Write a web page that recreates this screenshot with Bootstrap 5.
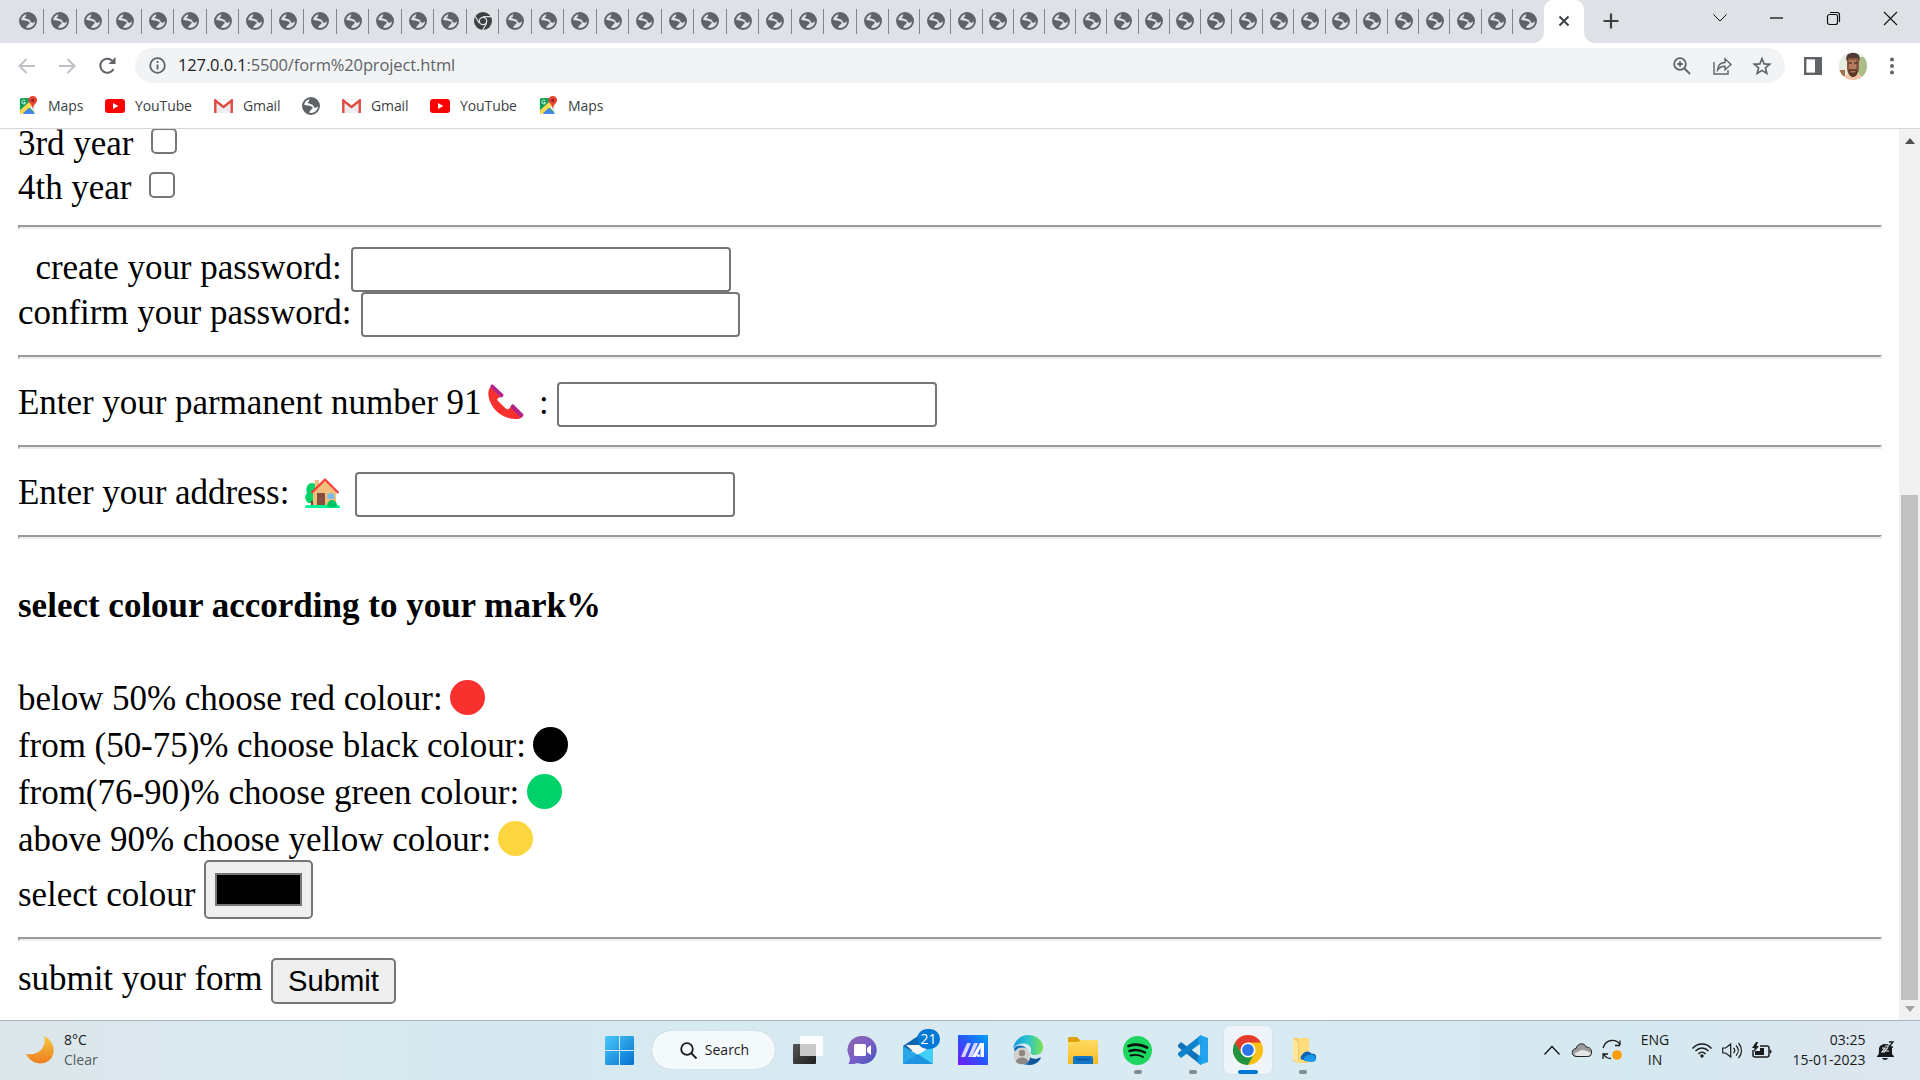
<!DOCTYPE html>
<html lang="en">
<head>
<meta charset="utf-8">
<title>form project</title>
<link href="https://cdn.jsdelivr.net/npm/bootstrap@5.3.0/dist/css/bootstrap.min.css" rel="stylesheet">
<style>
  body { width: 1920px; height: 1080px; font-family: "Open Sans", "Noto Sans", sans-serif; color: #000; background: #fff; }
  svg { display: block; flex: none; overflow: visible; }
  /* tab strip */
  .tabstrip { height: 43px; background: #dee1e6; padding-left: 11.5px; color: #5f6368; }
  .tab-mini { width: 32.5px; height: 42px; flex: none; }
  .tab-mini.narrow { width: 31.2px; }
  .tab-mini::after { content: ""; width: 1px; height: 25px; background: #80868b; margin-left: -1px; }
  .tab-mini:last-of-type::after { visibility: hidden; }
  .tab-mini svg { margin: 0 auto; }
  .tab-open { width: 40px; height: 43px; margin-right: -1px; padding-bottom: 1px; background: #fff; border-radius: 9px 9px 0 0; color: #3c4043; position: relative; }
  .tab-open::before, .tab-open::after { content: ""; position: absolute; bottom: 0; width: 10px; height: 10px; }
  .tab-open::before { left: -10px; background: radial-gradient(circle at 0 0, transparent 9.5px, #fff 10px); }
  .tab-open::after { right: -10px; background: radial-gradient(circle at 100% 0, transparent 9.5px, #fff 10px); }
  .win-btn { width: 57px; height: 36px; color: #111; }
  .win-set { margin-right: 1px; }
  /* toolbar */
  .toolbar-row { height: 45px; padding: 5px 0 5px 18px; color: #5f6368; }
  .omnibox { width: 1650px; height: 35px; border-radius: 18px; background: #f1f3f4; margin-left: 19px; padding: 0 14px; }
  .url-text { font-size: 16.500px; line-height: 22px; letter-spacing: -.13px; margin: 0 0 1px 12px; color: #5f6368; white-space: nowrap; }
  .url-text b { font-weight: 400; color: #202124; }
  .avatar { width: 28px; height: 28px; border-radius: 50%; overflow: hidden; }
  .bookmarks { height: 41px; border-bottom: 1px solid #d5d7da; padding: 0 0 5px 19px; font-size: 14px; color: #3c4043; }
  .bm { height: 24px; white-space: nowrap; flex: none; }
  .bm span { margin: 0 0 1px 10px; letter-spacing: -.1px; }
  /* page */
  .page-view { height: 891px; overflow: hidden; }
  .doc { width: 1899px; padding: 0 17.5px 0 18px; font-family: "Liberation Serif", serif; font-size: 35px; letter-spacing: -.04px; margin-top: -8px; height: 899px; }
  .line { display: flex; align-items: flex-start; height: 44px; line-height: 46px; white-space: pre; }
  .line > label, .line > span { flex: none; }
  .rule { height: 4px; border-style: solid; border-width: 2px; border-color: #9a9a9a #eee #eee #9a9a9a; }
  .text-in { width: 380px; height: 45px; border: 2px solid #767676; border-radius: 4px; margin-top: 2px; padding: 2px 4px; background: #fff; }
  .tick { appearance: none; width: 26px; height: 26px; border: 2px solid #767676; border-radius: 5px; background: #fff; margin: 6.500px 0 0; }
  .swatch { width: 109px; height: 59px; padding: 11px 9px; border: 2px solid #767676; border-radius: 5px; background: #efefef; margin-top: -12px; }
  .swatch::-webkit-color-swatch-wrapper { padding: 0; }
  .swatch::-webkit-color-swatch { border: 2px solid #767676; border-radius: 0; }
  .send { width: 125px; height: 46px; padding: 0; border: 2px solid #767676; border-radius: 5px; background: #efefef; color: #000; font: 29.2px/42px "Liberation Sans", sans-serif; margin-top: 2px; }
  .dot { width: 35px; height: 35px; border-radius: 50%; margin-top: 4px; }
  .doc h4 { font-size: 35px; font-weight: 700; letter-spacing: 0; margin: 0; }
  .scroller { width: 21px; background: #f1f1f1; height: 891px; padding: 9px 0 8px; }
  .thumb { width: 17px; height: 505px; background: #c1c1c1; }
  /* taskbar */
  .taskbar { height: 60px; border-top: 1px solid #a9b4bc; padding-bottom: 1px; background: linear-gradient(90deg, #dce6ea 0, #dce8ef 8%, #d6e9f0 25%, #d9eaf2 60%, #d5e9f1 85%, #dbe6ef 96%, #dce8ef 100%); font-size: 14px; line-height: 20px; color: #191919; }
  .slot { width: 55px; height: 58px; position: relative; left: -.500px; flex: none; }
  .slot.running::after { content: ""; position: absolute; bottom: 5px; left: 24px; width: 8px; height: 4px; border-radius: 2px; background: #7f8b91; }
  .slot.current::before { content: ""; position: absolute; left: 4px; top: 5px; width: 48px; height: 48px; border-radius: 5px; background: #eef4fa; box-shadow: 0 0 1px #aebcc4; }
  .slot.current::after { left: 18px; width: 20px; background: #0078d4; }
  .slot svg { position: relative; }
  .searchbox { width: 123px; height: 38px; border-radius: 19px; background: #f4f9fc; margin: 0 5.5px 0 4.5px; padding-left: 2px; box-shadow: 0 0 1px #9db0ba; font-size: 14px; }
  .mail-count { position: absolute; left: 27px; top: 8px; width: 23px; height: 20px; border-radius: 10px; background: #0078d4; color: #fff; font-size: 14px; }
  .tray { width: 30px; flex: none; }
</style>
<script src="https://cdn.jsdelivr.net/npm/bootstrap@5.3.0/dist/js/bootstrap.bundle.min.js"></script>
</head>
<body class="overflow-hidden">
<svg width="0" height="0" class="position-absolute">
  <defs>
    <symbol id="globe" viewBox="0 0 18 18"><circle cx="9" cy="9" r="8" fill="none" stroke="#5f6368" stroke-width="1.9"/><path fill="#5f6368" d="M1 8.200C3 7.500 4 8.600 6 8.600c1.800 0 2.200 1 3.400 1 1.500.1 1.600 1.700.6 2.300-1.300.6-1.200 1.300-2 2.200-.9 1-1 2-.300 3C3 16.500 1 13 1 8.200z"/><path fill="#5f6368" d="M9 .8C7.500 2.200 6.600 2.800 7 4c.3 1.200-1.800 1-1.500 2.100.3.700 1.500.2 2.200.7.800.7 2 .4 2.900 1 1 .7.700 2.200 2 2.700 1.300.4 2 .2 2.600-.700.500-.6 1.200-.8 2-.5C17.800 5 14 .8 9 .8z"/></symbol>
    <symbol id="chrome-dark" viewBox="0 0 18 18"><circle cx="9" cy="9" r="9" fill="#3c4043"/><circle cx="9" cy="9" r="3.700" fill="#3c4043" stroke="#dee1e6" stroke-width="1.300"/><path d="M9 4.700h8M5.300 11.200 1.300 4.500M12.700 11.200 8.600 18" stroke="#dee1e6" stroke-width="1.200"/></symbol>
    <symbol id="maps" viewBox="0 0 18 20"><path fill="#34a853" d="M2 2h13v16H2a2 2 0 0 1-2-2V4a2 2 0 0 1 2-2z"/><path fill="#0f9d58" d="M0 3h9v7l-9 6z"/><path fill="#ffd84d" d="m0 15 10-9 3 4-11 9H0z"/><path fill="#4285f4" d="m3 19 6-6 7 6z"/><path fill="#e6e9ed" d="m10 12 5-4 1 10z"/><path d="M5.500 5a2 2 0 1 0 .5 2H4" fill="none" stroke="#fff" stroke-width=".9"/><path fill="#ea4335" d="M13.500 0A4.400 4.400 0 0 0 9 4.500C9 8 13 8 13.500 14c.5-6 4.500-6 4.500-9.500A4.400 4.400 0 0 0 13.500 0z"/><circle cx="13.500" cy="4.500" r="1.600" fill="#8b251e"/></symbol>
    <symbol id="yt" viewBox="0 0 20 14"><rect width="20" height="14" rx="3" fill="#f00"/><path d="m8 4 5.300 3L8 10z" fill="#fff"/></symbol>
    <symbol id="gmail" viewBox="0 0 19 14"><path fill="#eee" d="M2 0h15v14H2z"/><path fill="#fff" d="m2 1 7.500 6L17 1z"/><path d="M2 14 8 7M17 14l-6-7" stroke="#ddd"/><path fill="none" stroke="#e04a3f" stroke-width="2.400" d="M1.300 14V1.500l8.200 6.500 8.200-6.500V14"/></symbol>
    <linearGradient id="blue" x2="1" y2="1"><stop stop-color="#4cc9fb"/><stop offset="1" stop-color="#0270cf"/></linearGradient>
    <linearGradient id="moonfill" x2="0" y2="1"><stop stop-color="#f5c842"/><stop offset="1" stop-color="#ee7d1d"/></linearGradient>
    <linearGradient id="violet" x2="1" y2="1"><stop stop-color="#8c66aa"/><stop offset=".5" stop-color="#7b5fc7"/><stop offset="1" stop-color="#4355bf"/></linearGradient>
    <linearGradient id="mi" x1="0" y1="1" x2="1" y2="0"><stop stop-color="#7417fa"/><stop offset=".5" stop-color="#2855fc"/><stop offset="1" stop-color="#00a5fb"/></linearGradient>
    <linearGradient id="yellow" x2="0" y2="1"><stop stop-color="#ffdb65"/><stop offset="1" stop-color="#fbba20"/></linearGradient>
    <linearGradient id="edgefill"><stop stop-color="#159bdf"/><stop offset=".5" stop-color="#2dc4cb"/><stop offset="1" stop-color="#7be34b"/></linearGradient>
    <linearGradient id="dark" x2="1" y2="1"><stop stop-color="#555"/><stop offset="1" stop-color="#202020"/></linearGradient>
  </defs>
</svg>

<header>
  <div class="tabstrip d-flex" id="tabs">
    <div class="tab-open d-flex align-items-center justify-content-center"><svg width="10" height="10" stroke="currentColor" stroke-width="2"><path d="m.5.5 9 9m0-9-9 9"/></svg></div>
    <svg style="margin:13px 0 0 20px" width="16" height="16" stroke="#3c4043" stroke-width="2.200"><path d="M8 .5v15M.5 8h15"/></svg>
    <div class="win-set d-flex ms-auto">
      <div class="win-btn d-flex align-items-center justify-content-center"><svg width="14" height="8" fill="none" stroke="currentColor"><path d="m.5.5 6.500 6.500 6.500-6.500"/></svg></div>
      <div class="win-btn d-flex align-items-center justify-content-center"><svg width="13" height="2"><path d="M0 1h13" stroke="currentColor" stroke-width="1.300"/></svg></div>
      <div class="win-btn d-flex align-items-center justify-content-center"><svg width="13" height="13" fill="none" stroke="currentColor" stroke-width="1.200"><rect x=".5" y="2.500" width="10" height="10" rx="2"/><path d="M3 .5h7a2.500 2.500 0 0 1 2.500 2.500v7"/></svg></div>
      <div class="win-btn d-flex align-items-center justify-content-center"><svg width="13" height="13" stroke="currentColor" stroke-width="1.100"><path d="m0 0 13 13M13 0 0 13"/></svg></div>
    </div>
  </div>

  <div class="toolbar-row d-flex align-items-center">
    <svg width="17" height="16" fill="none" stroke="#bdc1c6" stroke-width="2"><path d="M17 8H2M8.500 1 1.500 8l7 7"/></svg>
    <svg style="margin-left:24px" width="17" height="16" fill="none" stroke="#bdc1c6" stroke-width="2"><path d="M0 8h15M8.500 1l7 7-7 7"/></svg>
    <svg style="margin-left:22px" width="18" height="17" fill="none" stroke="#5f6368" stroke-width="2"><path d="M15.500 12A7 7 0 1 1 14 3.500"/><path fill="#5f6368" stroke="none" d="M17.500 0v7H10.500z"/></svg>
    <div class="omnibox d-flex align-items-center">
      <svg width="17" height="17" fill="none" stroke="#5f6368" stroke-width="1.800"><circle cx="8.500" cy="8.500" r="7.300"/><path d="M8.500 7.500v5M8.500 4v2"/></svg>
      <div class="url-text"><b>127.0.0.1</b>:5500/form%20project.html</div>
      <svg class="ms-auto" width="18" height="18" fill="none" stroke="#5f6368" stroke-width="1.800"><circle cx="7" cy="7" r="5.800"/><path d="m11.500 11.500 5.500 5.500M4.300 7h5.400M7 4.300v5.400"/></svg>
      <svg style="margin-left:22px" width="19" height="18" fill="none" stroke="#5f6368" stroke-width="1.400"><path d="M1 5v12h14v-4"/><path d="M4.500 13C5 8 8 5.500 12 5.500V1.800L18 7.500l-6 5.200V9.200C8.500 9 6.500 10.200 4.500 13z"/></svg>
      <svg style="margin:0 0 0 21px" width="18" height="18" fill="none" stroke="#5f6368" stroke-width="1.700"><path d="m9 1.700 2.100 5.200 5.600.4-4.300 3.600 1.400 5.500L9 13.400l-4.800 3 1.400-5.500L1.300 7.300l5.600-.4z"/></svg>
    </div>
    <svg style="margin-left:19px" width="18" height="18"><rect x="1.200" y="1.200" width="15.600" height="15.600" fill="#fff" stroke="#5f6368" stroke-width="2.400"/><path fill="#5f6368" d="M11 1h6v16h-6z"/></svg>
    <div class="avatar" style="margin-left:17px">
      <svg width="28" height="28"><path fill="#e8ebe0" d="M0 0h28v28H0z"/><path fill="#a9be88" d="M19 5h9v20h-8z"/><path fill="#a26f49" d="M0 18h6v6H0z"/><path fill="#f3c3aa" d="M3 28c1-5 5-6 11-6s10 1 11 6z"/><path fill="#8d5740" d="M8 6h12v10c0 5-3 9-6 9s-6-4-6-9z"/><path fill="#b47a5b" d="M10 8h7v8l-3 3-4-3z"/><path fill="#4b3a35" d="M7.500 9C6.500 3 9 1 14 1s7.500 2 6.500 8l-2-3h-9z"/><path fill="#5a3626" d="M9 18c3-1 7-1 10 0-1 5-3 7-5 7s-4-2-5-7z"/><path fill="#b97762" d="M11.500 19h5v1.500h-5z"/><path stroke="#36221a" stroke-width="1.200" d="M9.500 11h3.500M15 11h3.500"/></svg>
    </div>
    <svg style="margin-left:22px" width="6" height="18" fill="#5f6368"><circle cx="3" cy="2.500" r="2"/><circle cx="3" cy="9" r="2"/><circle cx="3" cy="15.500" r="2"/></svg>
  </div>

  <nav class="bookmarks d-flex align-items-center">
    <div class="bm d-flex align-items-center" style="width:86px"><svg width="19" height="19"><use href="#maps"/></svg><span>Maps</span></div>
    <div class="bm d-flex align-items-center" style="width:109px"><svg width="20" height="14"><use href="#yt"/></svg><span>YouTube</span></div>
    <div class="bm d-flex align-items-center" style="width:88px"><svg width="19" height="14"><use href="#gmail"/></svg><span>Gmail</span></div>
    <div class="bm d-flex align-items-center" style="width:40px"><svg width="18" height="18"><use href="#globe"/></svg></div>
    <div class="bm d-flex align-items-center" style="width:88px"><svg width="19" height="14"><use href="#gmail"/></svg><span>Gmail</span></div>
    <div class="bm d-flex align-items-center" style="width:109px"><svg width="20" height="14"><use href="#yt"/></svg><span>YouTube</span></div>
    <div class="bm d-flex align-items-center"><svg width="19" height="19"><use href="#maps"/></svg><span>Maps</span></div>
  </nav>
</header>

<main class="page-view d-flex">
  <form class="doc">
    <div class="line"><label style="width:133px">3rd year</label><input class="tick" type="checkbox"></div>
    <div class="line"><label style="width:131px">4th year</label><input class="tick" type="checkbox"></div>
    <div class="rule" style="margin:16px 0"></div>
    <div class="line" style="height:45px"><label style="width:333px;padding-left:17.5px">create your password:</label><input class="text-in" type="password"></div>
    <div class="line"><label style="width:343px">confirm your password:</label><input class="text-in" style="width:379px" type="password"></div>
    <div class="rule" style="margin:21px 0"></div>
    <div class="line"><label style="width:470px">Enter your parmanent number 91</label><svg style="margin-top:4px" width="35" height="35"><path fill="#f8312f" d="M2.500 3C-2 8 1 18 6 24.500 12 31.500 19 35 28 35c2.500 0 4-.5 5.500-1.500L22.700 22.500c-1.200 2.500-3 3.500-5 2L10 17c-1.500-2-.3-3 2.700-4z"/><path fill="#b4238a" d="m4.700.4 10.600 9.900c1 1-1.600 3.900-2.600 2.900L2.500 3.500C1.800 2.500 3.700-.3 4.700.4zM25.300 20.300l10 9.900c1 1-1.600 4.200-2.700 3.400L22.600 23.500c-.8-1 1.600-4.100 2.700-3.200z"/></svg><span style="width:34px;padding-left:16px">:</span><input class="text-in" type="text"></div>
    <div class="rule" style="margin:21px 0"></div>
    <div class="line"><label style="width:287px">Enter your address:</label><svg style="margin:8px 15px 0 0" width="35" height="32"><path fill="#00d26a" d="M7 5c4 0 7 5 7 9v11H3c-4-4-3-8-1-10-2-5 1-10 5-10z"/><path fill="#6d4534" d="M6 23h2.500v6H6z"/><path fill="#f3bd7b" d="M10 2h4v10h-4zM8 14 20 3l11 11v14H8z"/><path fill="none" stroke="#f8403b" stroke-width="2.300" stroke-linejoin="round" d="M6.500 15 20 1.500 33.500 15"/><path fill="#85503f" d="M12 15h8v13h-8z"/><path fill="#76bdf2" d="M22.500 15.500H29V21h-6.500z"/><path fill="#00f397" d="M0 29.500C0 28 1 27 2 27h31c1 0 2 1 2 2.500V30H0z"/><path fill="#00c463" d="M22 28c0-3 2-6 5-6s5 3 5 5.500c0 2.500-10 2.500-10 .5z"/></svg><input class="text-in" type="text"></div>
    <div class="rule" style="margin:21px 0 44px"></div>
    <h4 class="line">select colour according to your mark%</h4>
    <div class="line" style="height:47px;margin-top:49px"><span style="width:432px">below 50% choose red colour:</span><i class="dot" style="background:#f8312f"></i></div>
    <div class="line" style="height:47px"><span style="width:515px">from (50-75)% choose black colour:</span><i class="dot" style="background:#000"></i></div>
    <div class="line" style="height:47px"><span style="width:508.5px">from(76-90)% choose green colour:</span><i class="dot" style="background:#00d26a"></i></div>
    <div class="line" style="height:55px"><span style="width:480px">above 90% choose yellow colour:</span><i class="dot" style="background:#fcd53f"></i></div>
    <div class="line"><label style="width:186px">select colour</label><input class="swatch" type="color" value="#000000"></div>
    <div class="rule" style="margin:21px 0 15px"></div>
    <div class="line"><label style="width:253px">submit your form</label><button class="send" type="button">Submit</button></div>
  </form>
  <div class="scroller d-flex flex-column align-items-center justify-content-between">
    <svg width="10" height="6" fill="#505050"><path d="m0 6 5-6 5 6z"/></svg>
    <div class="mt-auto thumb" style="margin-bottom:6px"></div>
    <svg width="10" height="6" fill="#a3a3a3"><path d="m0 0 5 6 5-6z"/></svg>
  </div>
</main>

<footer class="taskbar d-flex align-items-center">
  <div class="d-flex align-items-center" style="width:592.5px;padding-left:26px">
    <svg width="28" height="28"><path fill="url(#moonfill)" d="M18 0c9 4 12 14 8 21-5 9-20 9-26-3 12 2 21-6 18-18z"/></svg>
    <div style="margin-left:10px"><div>8°C</div><div style="color:#555b5e">Clear</div></div>
  </div>
  <div class="slot d-flex align-items-center justify-content-center"><svg width="29" height="29"><path fill="url(#blue)" d="M1 0h13v14H0V1zM15 0h13l1 1v13H15zM0 15h14v14H1l-1-1zM15 15h14v13l-1 1H15z"/></svg></div>
  <div class="searchbox d-flex align-items-center justify-content-center gap-2"><svg width="17" height="17" fill="none" stroke="#1a1a1a" stroke-width="1.800"><circle cx="7" cy="7" r="5.800"/><path d="m11 11 5.500 5.500"/></svg><span>Search</span></div>
  <div class="slot d-flex align-items-center justify-content-center"><svg width="30" height="28"><rect y="8" width="23" height="20" rx="1" fill="url(#dark)"/><rect x="7" width="23" height="20" rx="1" fill="#fff" fill-opacity=".88"/><path fill="#c9c9c9" d="M7 8h16v12H7z"/></svg></div>
  <div class="slot d-flex align-items-center justify-content-center"><svg width="29" height="28"><path fill="url(#violet)" d="M14.500 0a14 14 0 1 1-5 27c-2 1-5 1-9 1 1-3 2-4 1-7A14 14 0 0 1 14.500 0z"/><rect x="6" y="8" width="12" height="12" rx="1.500" fill="#fff"/><path fill="#fff" d="m19 12 4-3v10l-4-3z"/></svg></div>
  <div class="slot d-flex align-items-center justify-content-center"><svg width="30" height="28"><path fill="#1064ae" d="M0 10 15 0l15 10v5H0z"/><path fill="#f5f5f5" d="M3 9h25L16 21z"/><path fill="#29a7e8" d="M0 10v18h30z"/><path fill="#41d0fa" d="M30 10v18L15 18.500z"/><path fill="#1e93e0" d="M0 28h30L15 18z"/></svg><span class="mail-count d-flex align-items-center justify-content-center">21</span></div>
  <div class="slot d-flex align-items-center justify-content-center"><svg width="30" height="30"><path fill="url(#mi)" d="M0 0h30v30H0z"/><path fill="#d7d4ff" d="M9 8h4L7 22H3zM16 8h4l-6 14h-4z"/><path fill="#fff" d="m22 8 4 0v14h-3.500v-9L18 22h-4z"/><circle cx="20.500" cy="20.500" r="1.500" fill="#fff"/></svg></div>
  <div class="slot d-flex align-items-center justify-content-center"><svg width="30" height="30"><path fill="#1470bb" d="M1 13c2 11 6 17 15 17 6 0 10-3 12-7-6 2-12 1-13-5-1-7-8-10-14-5z"/><path fill="url(#edgefill)" d="M0 13C2 5 8 0 15 0c9 0 15 6 15 12 0 5-3 8-8 8-4 0-5-2-4-4 1-7-9-11-18-3z"/><path fill="#12569a" d="M15 20c2 5 8 5 13 2-3 6-8 8-13 8z"/><circle cx="9" cy="21" r="8.500" fill="#d1d0cf"/><circle cx="9" cy="18" r="3.200" fill="#8c8785"/><path fill="#8c8785" d="M3 27c0-6 12-6 12 0-3 3-9 3-12 0z"/></svg></div>
  <div class="slot d-flex align-items-center justify-content-center"><svg width="30" height="27"><path fill="#e0a10a" d="M0 1.500C0 .7.700 0 1.500 0H9l3 3h17c1 0 1 1 1 2H0z"/><path fill="url(#yellow)" d="M0 5h10l3-2h17v23c0 1 0 1-1 1H1c-1 0-1 0-1-1z"/><path fill="#1176c5" d="M5 27v-6a2 2 0 0 1 2-2h16a2 2 0 0 1 2 2v6z"/><path stroke="#0b4e91" stroke-width="1.300" d="M8.500 22.500h13"/></svg></div>
  <div class="slot running d-flex align-items-center justify-content-center"><svg width="29" height="29"><circle cx="14.500" cy="14.500" r="14.500" fill="#1ed760"/><path fill="none" stroke="#07120b" stroke-linecap="round" d="M5.500 10c6-2 13-1.500 18.500 1.500" stroke-width="2.800"/><path fill="none" stroke="#07120b" stroke-linecap="round" stroke-width="2.400" d="M6.500 15c5-1.500 11-1 15.500 1.500"/><path fill="none" stroke="#07120b" stroke-linecap="round" stroke-width="1.900" d="M7.500 19.500c4-1 9-.6 12.500 1.500"/></svg></div>
  <div class="slot running d-flex align-items-center justify-content-center"><svg width="30" height="30"><path fill="#1272b9" d="m0 10 3-3 20 15v8L0 12z"/><path fill="#0f82cc" d="m0 20 3 3L23 8V0L0 18z"/><path fill="#23a3ee" d="m22 0 8 3v24l-8 3z"/><path fill="#159ce3" d="m20 2 3-2v9l-3 1zM20 28l3 2v-9l-3-1z"/></svg></div>
  <div class="slot running current d-flex align-items-center justify-content-center"><svg width="30" height="30"><circle cx="15" cy="15" r="15" fill="#fbc116"/><path fill="#e33b2e" d="M2 7.500A15 15 0 0 1 28 7.500H15L8.500 19z"/><path fill="#229342" d="M2 7.500 8.500 18.700 15 22.500 21 19 15 30A15 15 0 0 1 2 7.500z"/><circle cx="15" cy="15" r="7.500" fill="#fff"/><circle cx="15" cy="15" r="5.900" fill="#2d76e8"/></svg></div>
  <div class="slot running d-flex align-items-center justify-content-center"><svg width="30" height="27"><path fill="#ffdc7b" d="M5 1h16v25H8z"/><path fill="#f2c75f" d="M5 1h4l2 4v19l-2 2-4-2z"/><path fill="#ffe69a" d="m5 1 5 4v21l-5-3z"/><path fill="#0d64b5" d="M14 18c2-4 7-5 10-1 3-1 5 2 4 5l-13 1c-3 0-3-4-1-5z"/><path fill="#1b98ea" d="M16 21c4-5 12-4 12 1s-10 2-12 2z"/></svg></div>
  <div class="d-flex align-items-center ms-auto" style="width:383px">
    <div class="tray d-flex justify-content-center"><svg width="16" height="9" fill="none" stroke="#111" stroke-width="1.300"><path d="m.5 8.500 7.500-8 7.500 8"/></svg></div>
    <div class="tray d-flex justify-content-center"><svg width="20" height="14"><path fill="#9b9b9b" stroke="#222" d="M4 13.500C-1 13-1 6 4 5.500 6-1 13 0 14 4c4 0 6 3 5.500 6-.5 3-2 3.500-4 3.500z"/><path fill="#e5e5e5" d="M2 11c2-2 4-2 7-4 4 0 7 1 10 3-1 2-2 3-4 3H5z"/></svg></div>
    <div class="tray d-flex justify-content-center"><svg width="20" height="20" fill="none" stroke="#1b1b1b" stroke-width="1.300"><path d="M1 8C4-2 15-1 18 5V.500M18 5.500h-5M1 19v-5h5M2 14.500c1 2 4 4 7 4"/><circle cx="15" cy="15" r="4.800" fill="#ff9a08" stroke="none"/></svg></div>
    <div class="text-center" style="width:56px;margin-right:4px">ENG<br>IN</div>
    <div class="tray d-flex justify-content-center"><svg width="20" height="15" fill="none" stroke="#1b1b1b" stroke-width="1.400"><path d="M.5 5.500c5-6 14-6 19 0M3.500 8c4-4 9-4 13 0M6.500 11c2-2.500 5-2.500 7 0"/><circle cx="10" cy="13" r="1.700" fill="#1b1b1b" stroke="none"/></svg></div>
    <div class="tray d-flex justify-content-center"><svg width="20" height="17" fill="none" stroke="#1b1b1b" stroke-width="1.200"><path d="M.7 6v5h3l5 4V2l-5 4zM11.500 6c1.500 1.500 1.500 3.500 0 5M14 3.500c3 3 3 7 0 10M16.500 1c4 4.500 4 10.500 0 15"/></svg></div>
    <div class="tray d-flex justify-content-center"><svg width="20" height="17"><path fill="none" stroke="#1b1b1b" stroke-width="1.500" d="M8 4h7a2 2 0 0 1 2 2v7a2 2 0 0 1-2 2H3a2 2 0 0 1-2-2V8"/><path fill="#1b1b1b" d="M18 7.500c2 0 2 4 0 4zM3 9h5V6h4v7H3zM4 0 0 6h2.500L2 10l5-6H4.500L6 0z"/></svg></div>
    <div class="text-end" style="width:88.5px">03:25<br><span class="text-nowrap">15-01-2023</span></div>
    <svg style="margin-left:11px" width="17" height="19"><path fill="#15191c" d="M0 15c2-1 2-3 2-7 0-6 11-7 13-1v5c0 2 1 2 2 3v1H0zM5 17h6c-1 2.500-5 2.500-6 0z"/><path fill="none" stroke="#eef4f7" stroke-width="1.200" d="M5 7h3l-3 4h3M8 5h4l-4 5h4"/><path fill="none" stroke="#15191c" stroke-width="1.300" d="M12 1h4l-4 5h4"/></svg>
  </div>
</footer>

<script>
  // 48 collapsed tabs: the first 27 are slightly wider than the rest
  const strip = document.getElementById('tabs');
  const open = strip.querySelector('.tab-open');
  for (let i = 0; i < 48; i++) {
    const tab = document.createElement('span');
    tab.className = 'tab-mini d-flex align-items-center' + (i > 26 ? ' narrow' : '');
    tab.innerHTML = `<svg width="18" height="18"><use href="#${i === 14 ? 'chrome-dark' : 'globe'}"/></svg>`;
    strip.insertBefore(tab, open);
  }
</script>
</body>
</html>
